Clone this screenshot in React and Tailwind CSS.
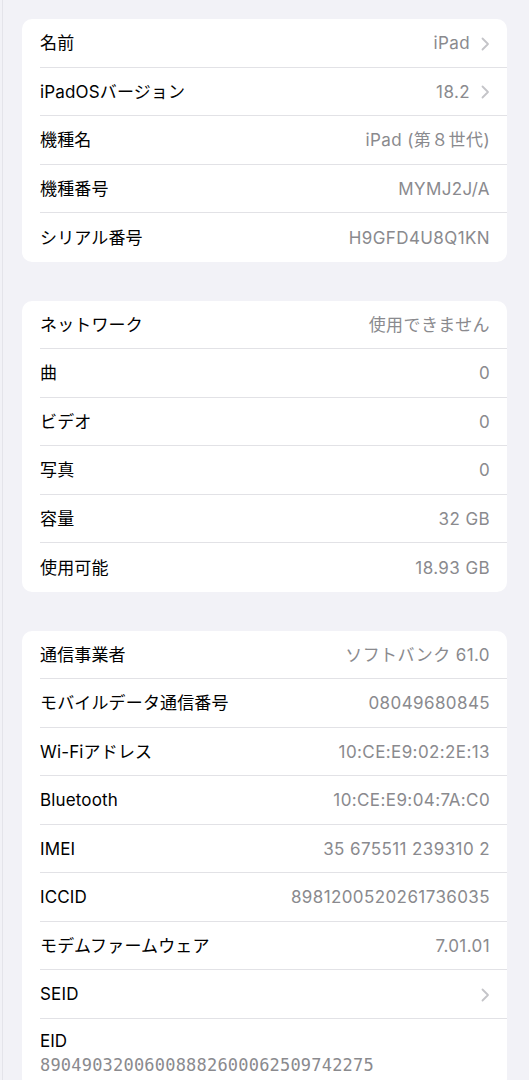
const SECTIONS = [
  [
    { label: '名前', value: 'iPad', chevron: true },
    { label: 'iPadOSバージョン', value: '18.2', chevron: true },
    { label: '機種名', value: 'iPad (第８世代)' },
    { label: '機種番号', value: 'MYMJ2J/A' },
    { label: 'シリアル番号', value: 'H9GFD4U8Q1KN' },
  ],
  [
    { label: 'ネットワーク', value: '使用できません' },
    { label: '曲', value: '0' },
    { label: 'ビデオ', value: '0' },
    { label: '写真', value: '0' },
    { label: '容量', value: '32 GB' },
    { label: '使用可能', value: '18.93 GB' },
  ],
  [
    { label: '通信事業者', value: 'ソフトバンク 61.0' },
    { label: 'モバイルデータ通信番号', value: '08049680845' },
    { label: 'Wi-Fiアドレス', value: '10:CE:E9:02:2E:13' },
    { label: 'Bluetooth', value: '10:CE:E9:04:7A:C0' },
    { label: 'IMEI', value: '35 675511 239310 2' },
    { label: 'ICCID', value: '8981200520261736035' },
    { label: 'モデムファームウェア', value: '7.01.01' },
    { label: 'SEID', value: '', chevron: true },
    { label: 'EID', value: '89049032006008882600062509742275', stacked: true },
  ],
]

function Chevron() {
  return (
    <svg width="9" height="14" viewBox="0 0 9 14" className="ml-[11px] shrink-0">
      <path d="M1.5 1.5 L7 7 L1.5 12.5" fill="none" stroke="#c4c4c8" strokeWidth="1.8" strokeLinecap="round" strokeLinejoin="round" />
    </svg>
  )
}

function Row({ label, value, chevron, stacked, last }) {
  if (stacked) {
    return (
      <div className="pl-[18px] pt-[10px] pb-[12px]">
        <div className="text-[17px] leading-[24px] text-black">{label}</div>
        <div className="text-[17px] leading-[24px] text-[#8a8a8e] font-['DejaVu_Sans_Mono',monospace] tracking-[0.2px]">{value}</div>
      </div>
    )
  }
  return (
    <div className="pl-[18px]">
      <div className={`h-[48.5px] flex items-center pr-[17px] pt-[2px] ${last ? '' : 'border-b border-[#e2e2e6]'}`}>
        <span className="flex-1 text-[17px] text-black tracking-[0.15px]">{label}</span>
        <span className="text-[17px] text-[#8a8a8e] tracking-[0.4px]">{value}</span>
        {chevron && <Chevron />}
      </div>
    </div>
  )
}

export default function App() {
  return (
    <div className="flex min-h-screen bg-[#f2f2f7] font-['Inter','Noto_Sans_CJK_JP',sans-serif]">
      <div className="w-[2px] shrink-0" />
      <div className="w-px shrink-0 bg-[#e4e4ea]" />
      <div className="flex-1 pl-[19px] pr-[22px] pt-[19px] flex flex-col gap-[39px]">
        {SECTIONS.map((rows, si) => (
          <div key={si} className="bg-white rounded-[10px] overflow-hidden">
            {rows.map((r, i) => (
              <Row key={r.label} {...r} last={i === rows.length - 1} />
            ))}
          </div>
        ))}
      </div>
    </div>
  )
}
